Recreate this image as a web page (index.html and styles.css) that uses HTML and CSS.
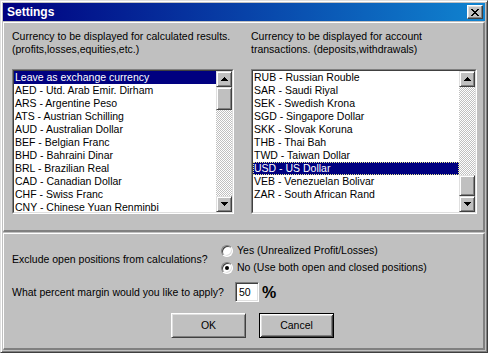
FILE: index.html
```html
<!DOCTYPE html>
<html>
<head>
<meta charset="utf-8">
<title>Settings</title>
<link rel="stylesheet" href="styles.css">
</head>
<body>
<div class="window">
  <div class="titlebar">
    <span class="title">Settings</span>
    <span class="close">
      <svg width="8" height="7" viewBox="0 0 8 7" shape-rendering="crispEdges"><path fill="#000" d="M0 0h2v1H0zM6 0h2v1H6zM1 1h2v1H1zM5 1h2v1H5zM2 2h4v1H2zM3 3h2v1H3zM2 4h4v1H2zM1 5h2v1H1zM5 5h2v1H5zM0 6h2v1H0zM6 6h2v1H6z"/></svg>
    </span>
  </div>

  <div class="panel panel-top">
    <div class="col col-left">
      <p class="desc">Currency to be displayed for calculated results.<br>(profits,losses,equities,etc.)</p>
      <div class="listbox">
        <div class="listbox-inner">
          <ul class="items">
            <li class="sel">Leave as exchange currency</li>
            <li>AED - Utd. Arab Emir. Dirham</li>
            <li>ARS - Argentine Peso</li>
            <li>ATS - Austrian Schilling</li>
            <li>AUD - Australian Dollar</li>
            <li>BEF - Belgian Franc</li>
            <li>BHD - Bahraini Dinar</li>
            <li>BRL - Brazilian Real</li>
            <li>CAD - Canadian Dollar</li>
            <li>CHF - Swiss Franc</li>
            <li>CNY - Chinese Yuan Renminbi</li>
          </ul>
          <div class="scrollbar">
            <span class="sb-btn"><svg width="7" height="4" viewBox="0 0 7 4" shape-rendering="crispEdges"><path d="M3 0h1v1H3zM2 1h3v1H2zM1 2h5v1H1zM0 3h7v1H0z"/></svg></span>
            <span class="track"><span class="thumb thumb-left"></span></span>
            <span class="sb-btn"><svg width="7" height="4" viewBox="0 0 7 4" shape-rendering="crispEdges"><path d="M0 0h7v1H0zM1 1h5v1H1zM2 2h3v1H2zM3 3h1v1H3z"/></svg></span>
          </div>
        </div>
      </div>
    </div>
    <div class="col col-right">
      <p class="desc">Currency to be displayed for account<br>transactions. (deposits,withdrawals)</p>
      <div class="listbox">
        <div class="listbox-inner">
          <ul class="items">
            <li>RUB - Russian Rouble</li>
            <li>SAR - Saudi Riyal</li>
            <li>SEK - Swedish Krona</li>
            <li>SGD - Singapore Dollar</li>
            <li>SKK - Slovak Koruna</li>
            <li>THB - Thai Bah</li>
            <li>TWD - Taiwan Dollar</li>
            <li class="sel focus">USD - US Dollar</li>
            <li>VEB - Venezuelan Bolivar</li>
            <li>ZAR - South African Rand</li>
          </ul>
          <div class="scrollbar">
            <span class="sb-btn"><svg width="7" height="4" viewBox="0 0 7 4" shape-rendering="crispEdges"><path d="M3 0h1v1H3zM2 1h3v1H2zM1 2h5v1H1zM0 3h7v1H0z"/></svg></span>
            <span class="track track-end"><span class="thumb thumb-right"></span></span>
            <span class="sb-btn"><svg width="7" height="4" viewBox="0 0 7 4" shape-rendering="crispEdges"><path d="M0 0h7v1H0zM1 1h5v1H1zM2 2h3v1H2zM3 3h1v1H3z"/></svg></span>
          </div>
        </div>
      </div>
    </div>
  </div>

  <div class="panel panel-bottom">
    <div class="row row-exclude">
      <span class="label label-exclude">Exclude open positions from calculations?</span>
      <div class="radios">
        <label class="radio-row"><span class="radio"></span><span>Yes (Unrealized Profit/Losses)</span></label>
        <label class="radio-row"><span class="radio checked"></span><span>No (Use both open and closed positions)</span></label>
      </div>
    </div>
    <div class="row row-margin">
      <span class="label label-margin">What percent margin would you like to apply?</span>
      <span class="textbox">50</span>
      <span class="percent">%</span>
    </div>
    <div class="buttons">
      <span class="btn">OK</span>
      <span class="btn btn-default">Cancel</span>
    </div>
  </div>
</div>
</body>
</html>
```

FILE: styles.css
```css
* { box-sizing: border-box; }
html, body { margin: 0; padding: 0; }
body {
  width: 488px;
  height: 353px;
  overflow: hidden;
  background: #c0c0c0;
  color: #000;
  font-family: "Liberation Sans", Arial, sans-serif;
  font-size: 10.5px;
  line-height: 13px;
}
.window {
  width: 488px;
  height: 353px;
  border: 1px solid;
  border-color: #dfdfdf #404040 #404040 #dfdfdf;
  box-shadow: inset 1px 1px #fff, inset -1px -1px #808080;
  padding: 2px;
  display: flex;
  flex-direction: column;
  background: #c0c0c0;
}
.titlebar {
  height: 18px;
  flex: none;
  display: flex;
  align-items: center;
  justify-content: space-between;
  padding: 0 2px 0 4px;
  background: linear-gradient(90deg, #000080, #1084d0);
  color: #fff;
}
.title { font-weight: bold; font-size: 12px; }
.close {
  width: 16px;
  height: 14px;
  border: 1px solid;
  border-color: #fff #404040 #404040 #fff;
  box-shadow: inset -1px -1px #808080, inset 1px 1px #dfdfdf;
  background: #c0c0c0;
  display: flex;
  align-items: center;
  justify-content: center;
}
.panel {
  border-style: solid;
  border-color: #fff #808080 #808080 #fff;
  border-width: 1px 2px 2px 1px;
  margin-top: 1px;
}
.panel-top {
  height: 210px;
  flex: none;
  display: flex;
  gap: 17px;
  padding: 7px 6px 0 8px;
}
.col { display: flex; flex-direction: column; }
.col-left { width: 222px; }
.col-right { width: 226px; }
.desc { margin: 0 0 13px; white-space: nowrap; }
.listbox {
  height: 145px;
  border: 1px solid;
  border-color: #808080 #fff #fff #808080;
  background: #fff;
  display: flex;
}
.listbox-inner {
  flex: 1;
  min-width: 0;
  border: 1px solid;
  border-color: #404040 #dfdfdf #dfdfdf #404040;
  display: flex;
  overflow: hidden;
}
.items {
  flex: 1;
  min-width: 0;
  margin: 0;
  padding: 0;
  list-style: none;
  overflow: hidden;
}
.items li {
  height: 13px;
  line-height: 13px;
  padding-left: 1px;
  white-space: nowrap;
}
.items li.sel { background: #000080; color: #fff; }
.items li.focus { outline: 1px dotted #e8e890; outline-offset: -1px; }
.scrollbar {
  width: 16px;
  flex: none;
  display: flex;
  flex-direction: column;
}
.sb-btn, .thumb {
  background: #c0c0c0;
  border: 1px solid;
  border-color: #dfdfdf #404040 #404040 #dfdfdf;
  box-shadow: inset 1px 1px #fff, inset -1px -1px #808080;
}
.sb-btn {
  height: 16px;
  flex: none;
  display: flex;
  align-items: center;
  justify-content: center;
}
.track {
  flex: 1;
  display: flex;
  flex-direction: column;
  background: repeating-conic-gradient(#c0c0c0 0 25%, #fff 0 50%) 0 0 / 2px 2px;
}
.track-end { justify-content: flex-end; }
.thumb { display: block; flex: none; }
.thumb-left { height: 23px; }
.thumb-right { height: 21px; }

.panel-bottom {
  flex: 1;
  padding: 8px 6px 0 8px;
  display: flex;
  flex-direction: column;
}
.row { display: flex; align-items: center; }
.label { flex: none; white-space: nowrap; }
.label-exclude { width: 209px; }
.label-margin { width: 223px; }
.radios { display: flex; flex-direction: column; }
.radio-row {
  height: 17px;
  display: flex;
  align-items: center;
  gap: 4px;
  white-space: nowrap;
}
.radio {
  position: relative;
  width: 12px;
  height: 12px;
  border-radius: 50%;
  background: #fff;
  border: 1px solid;
  border-color: #808080 #fff #fff #808080;
  box-shadow: inset 1px 1px #404040, inset -1px -1px #dfdfdf;
  flex: none;
}
.radio.checked::after {
  content: "";
  position: absolute;
  left: 3px;
  top: 3px;
  width: 4px;
  height: 4px;
  border-radius: 50%;
  background: #000;
}
.row-margin { margin-top: 6px; }
.textbox {
  width: 24px;
  height: 20px;
  background: #fff;
  border: 1px solid;
  border-color: #808080 #fff #fff #808080;
  box-shadow: inset 1px 1px #404040, inset -1px -1px #dfdfdf;
  padding: 3px 0 0 3px;
  flex: none;
}
.percent {
  font-weight: bold;
  font-size: 16px;
  margin-left: 3px;
}
.buttons {
  display: flex;
  gap: 13px;
  margin: 11px 0 0 159px;
}
.btn {
  width: 75px;
  height: 25px;
  display: flex;
  align-items: center;
  justify-content: center;
  background: #c0c0c0;
  border: 1px solid;
  border-color: #fff #404040 #404040 #fff;
  box-shadow: inset 1px 1px #dfdfdf, inset -1px -1px #808080;
}
.btn-default {
  border-color: #000;
  box-shadow: inset 1px 1px #fff, inset -1px -1px #404040, inset 2px 2px #dfdfdf, inset -2px -2px #808080;
}
```
